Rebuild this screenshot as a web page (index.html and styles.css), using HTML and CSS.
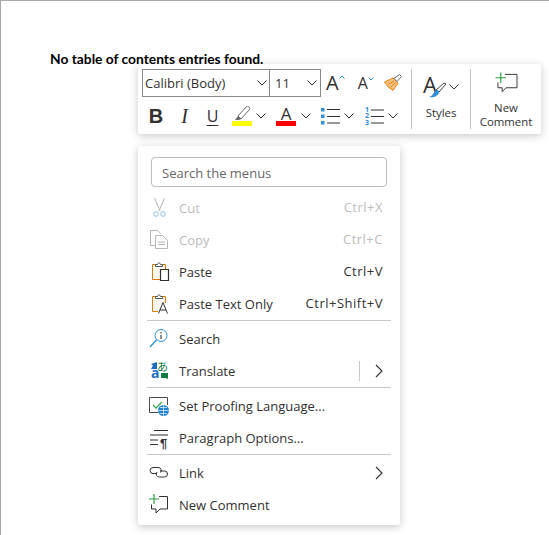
FILE: index.html
```html
<!DOCTYPE html>
<html lang="en">
<head>
    <meta charset="UTF-8">
    <title>Document context menu</title>
    <link rel="stylesheet" href="styles.css">
</head>
<body>
    <svg class="defs" aria-hidden="true">
        <symbol id="chev" viewBox="0 0 10 6"><path d="M.5.5 5 5 9.500.5" fill="none" stroke="#323130"/></symbol>
    </svg>

    <div class="page">
        <p class="toc-note">No table of contents entries found.</p>
    </div>

    <!-- Mini toolbar -->
    <div class="toolbar">
        <div class="tb-rows">
            <div class="tb-row">
                <div class="font-picker">
                    <div class="font-name"><span>Calibri (Body)</span><svg class="chev"><use href="#chev"/></svg></div>
                    <div class="font-size"><span>11</span><svg class="chev"><use href="#chev"/></svg></div>
                </div>
                <div class="grow-btn grow-big">
                    <span>A</span>
                    <svg class="caret" viewBox="0 0 6 4"><path d="M.5 3.500 3 1l2.500 2.500" fill="none" stroke="#2e8fd6"/></svg>
                </div>
                <div class="grow-btn grow-small">
                    <span>A</span>
                    <svg class="caret" viewBox="0 0 6 4"><path d="M.5.500 3 3 5.500.5" fill="none" stroke="#2e8fd6"/></svg>
                </div>
                <svg class="painter" viewBox="0 0 18 18">
                    <path d="M.5 8 9 4l5 5-5 7.500Q4 14 .5 8Z" fill="#f9c083" stroke="#e8830c"/>
                    <path d="M4 10.500 10 7M6.500 13.500l5-5" stroke="#e8830c" fill="none"/>
                    <path d="m10 4.500 3 3 4.500-5-2-2Z" fill="#fff" stroke="#6e6e6e"/>
                </svg>
            </div>
            <div class="tb-row">
                <div class="tb-btn btn-b">B</div>
                <div class="tb-btn btn-i">I</div>
                <div class="tb-btn btn-u">U</div>
                <div class="tb-btn btn-hi">
                    <div class="swatch-icon">
                        <svg class="pen" viewBox="0 0 20 15">
                            <path d="m6 10 8-9c1-1 2-1 3 0s1 2 0 3l-8 9Z" fill="#fff" stroke="#6a6a6a"/>
                            <path d="m6 10 3 3-2 1H3Z" fill="#6a6a6a"/>
                        </svg>
                        <i class="bar bar-yellow"></i>
                    </div>
                    <svg class="chev"><use href="#chev"/></svg>
                </div>
                <div class="tb-btn btn-color">
                    <div class="swatch-icon">
                        <span class="color-a">A</span>
                        <i class="bar bar-red"></i>
                    </div>
                    <svg class="chev"><use href="#chev"/></svg>
                </div>
                <div class="tb-btn btn-list btn-bullets">
                    <svg class="list-icon" viewBox="0 0 20 19">
                        <path d="M0 1h3.500v3.500H0ZM0 7.500h3.500V11H0ZM0 14h3.500v3.500H0Z" fill="#2e8fd6"/>
                        <path d="M6 2.500h13M6 9.500h13M6 16h13" stroke="#323130"/>
                    </svg>
                    <svg class="chev"><use href="#chev"/></svg>
                </div>
                <div class="tb-btn btn-list">
                    <div class="num-list">
                        <span class="nums">1<br>2<br>3</span>
                        <svg class="num-lines" viewBox="0 0 14 19"><path d="M0 3h13M0 9.500h13M0 16h13" stroke="#323130"/></svg>
                    </div>
                    <svg class="chev"><use href="#chev"/></svg>
                </div>
            </div>
        </div>

        <div class="tb-big tb-styles">
            <div class="styles-icon">
                <svg class="styles-svg" viewBox="0 0 24 24">
                    <text x="0" y="18" class="styles-a">A</text>
                    <path d="m13 15 8-7 2 1-7 8Z" fill="#fff" stroke="#444"/>
                    <path d="M6 22c4 1 10-1 10-5 0-2-3-3-4-1-2 2-2 5-6 6Z" fill="#2e8fd6"/>
                </svg>
                <svg class="chev"><use href="#chev"/></svg>
            </div>
            <span class="big-label">Styles</span>
        </div>
        <div class="tb-big tb-comment">
            <svg class="comment-svg" viewBox="0 0 23 22">
                <path d="M10 2.500h12.500v14H11l-4 4v-4H2.500V11" fill="#fff" stroke="#323130"/>
                <path d="M5.500.5v11M0 6h11" stroke="#2f9e44" stroke-width="1.200"/>
            </svg>
            <span class="big-label">New<br>Comment</span>
        </div>
    </div>

    <!-- Context menu -->
    <div class="menu">
        <div class="menu-search">Search the menus</div>

        <div class="item off">
            <svg class="ico" viewBox="0 0 20 20">
                <path d="M5.500 0 11 13M15.500 0 10 13" fill="none" stroke="#b5b5b5"/>
                <circle cx="7" cy="16" r="2.300" fill="none" stroke="#8cc0ea"/>
                <circle cx="14" cy="16" r="2.300" fill="none" stroke="#8cc0ea"/>
            </svg>
            <span class="label">Cut</span><span class="keys">Ctrl+X</span>
        </div>
        <div class="item off">
            <svg class="ico" viewBox="0 0 20 20">
                <path d="M7 15.500H1.500V.5h7l3 3" fill="none" stroke="#b5b5b5"/>
                <path d="M6.500 5.500h7l5 5v8h-12Z" fill="#fff" stroke="#b5b5b5"/>
                <path d="M9 12h7M9 14.500h7" stroke="#b5b5b5"/>
            </svg>
            <span class="label">Copy</span><span class="keys">Ctrl+C</span>
        </div>
        <div class="item">
            <svg class="ico" viewBox="0 0 20 20">
                <path d="M3.500 2.500h13v15h-13Z" fill="#fdf8f1" stroke="#e07a00"/>
                <path d="M6.500 4.500v-2h2c0-2 3-2 3 0h2v2Z" fill="#fff" stroke="#555"/>
                <path d="M11.500 7.500h8v11h-8Z" fill="#fff" stroke="#323130" stroke-width="1.200"/>
            </svg>
            <span class="label">Paste</span><span class="keys">Ctrl+V</span>
        </div>
        <div class="item">
            <svg class="ico" viewBox="0 0 20 20">
                <path d="M9 17.500H3.500v-15h13V9" fill="#fdf8f1" stroke="#e07a00"/>
                <path d="M6.500 4.500v-2h2c0-2 3-2 3 0h2v2Z" fill="#fff" stroke="#555"/>
                <path d="m9.500 19.500 4.500-11 4.500 11M11 16h6" fill="none" stroke="#323130"/>
            </svg>
            <span class="label">Paste Text Only</span><span class="keys">Ctrl+Shift+V</span>
        </div>

        <div class="sep"></div>

        <div class="item">
            <svg class="ico" viewBox="0 0 20 20">
                <circle cx="12" cy="6.500" r="6" fill="#fff" stroke="#2e8fd6"/>
                <path d="M7.500 11 1 18" stroke="#2e8fd6" stroke-width="1.300"/>
                <path d="M12 6v4M12 3v1.500" stroke="#323130" stroke-width="1.100"/>
            </svg>
            <span class="label">Search</span>
        </div>
        <div class="item">
            <svg class="ico" viewBox="0 0 20 20">
                <path d="M8 1v7H2l2-3.500L2 3Z" fill="#1b6ec2"/>
                <text x="2" y="17" class="tr-a">a</text>
                <text x="8" y="10" class="tr-j">あ</text>
                <path d="M12 17v-5h7v6l-2.500-1Z" fill="#107c41"/>
            </svg>
            <span class="label">Translate</span>
            <span class="split"></span>
            <svg class="more" viewBox="0 0 8 14"><path d="m1 1 6 6-6 6" fill="none" stroke="#323130" stroke-width="1.100"/></svg>
        </div>

        <div class="sep"></div>

        <div class="item">
            <svg class="ico" viewBox="0 0 20 20">
                <path d="M9 16.500H.5v-15h18V9" fill="none" stroke="#4a4a4a"/>
                <path d="m4 9 3 3 6-6" fill="none" stroke="#3aa655" stroke-width="1.300"/>
                <circle cx="14.500" cy="14.500" r="5.500" fill="#1f82d4"/>
                <path d="M9 14.500h11M14.500 9v11M11 11.500h7M11 17.500h7" stroke="#d5e9f9" stroke-width=".8"/>
            </svg>
            <span class="label">Set Proofing Language...</span>
        </div>
        <div class="item">
            <svg class="ico" viewBox="0 0 20 20">
                <path d="M5 2.500h14M1 7h18M1 12h8M1 16.500h8" stroke="#323130"/>
                <text x="11" y="20" class="pilcrow">¶</text>
            </svg>
            <span class="label">Paragraph Options...</span>
        </div>

        <div class="sep"></div>

        <div class="item">
            <svg class="ico" viewBox="0 0 20 20">
                <path d="M8 10.500H4a3 3 0 0 1 0-6h5a3 3 0 0 1 2.500 5" fill="none" stroke="#323130"/>
                <path d="M11 8h4.500a3 3 0 0 1 0 6h-5a3 3 0 0 1-2.500-5" fill="none" stroke="#323130"/>
            </svg>
            <span class="label">Link</span>
            <svg class="more" viewBox="0 0 8 14"><path d="m1 1 6 6-6 6" fill="none" stroke="#323130" stroke-width="1.100"/></svg>
        </div>
        <div class="item">
            <svg class="ico" viewBox="0 0 20 20">
                <path d="M10 1.500h8.500V14H11l-4 4v-4H2.500V9.500" fill="#fff" stroke="#323130"/>
                <path d="M5-1V9M0 4h10" stroke="#2f9e44" stroke-width="1.200"/>
            </svg>
            <span class="label">New Comment</span>
        </div>
    </div>
</body>
</html>
```

FILE: styles.css
```css
html, body {
    margin: 0;
    height: 100%;
    background-color: #fff;
    overflow: hidden;
}
body {
    font-family: "Open Sans", sans-serif;
    font-size: 13px;
    color: #323130;
}
.defs {
    display: none;
}
.page {
    height: 100%;
    box-sizing: border-box;
    border-top: 1px solid #a8a8a8;
    border-left: 1px solid #a8a8a8;
    padding: 50px 0 0 49px;
}
.toc-note {
    margin: 0;
    font-family: Lato, sans-serif;
    font-weight: bold;
    font-size: 13.8px;
    line-height: 16px;
    color: #000;
}

/* toolbar */
.toolbar {
    position: absolute;
    left: 138px;
    top: 64px;
    width: 403px;
    height: 70px;
    display: flex;
    background: #fff;
    border-radius: 2px;
    box-shadow: 0 2px 8px rgba(0, 0, 0, 0.22);
}
.tb-rows {
    width: 269px;
    padding: 5px 0 0 4px;
}
.tb-row {
    display: flex;
    align-items: center;
}
.tb-row + .tb-row {
    margin-top: 2px;
    height: 34px;
}
.chev {
    width: 10px;
    height: 6px;
    flex: none;
}
.font-picker {
    display: flex;
    flex: none;
    width: 179px;
    height: 28px;
    box-sizing: border-box;
    border: 1px solid #8a8a8a;
}
.font-name, .font-size {
    display: flex;
    align-items: center;
    justify-content: space-between;
    box-sizing: border-box;
}
.font-name {
    width: 127px;
    padding: 0 2px;
    border-right: 1px solid #8a8a8a;
}
.font-size {
    flex: 1;
    padding: 0 3px 0 5px;
}
.grow-btn {
    display: flex;
    align-items: flex-start;
    line-height: 1;
}
.grow-big {
    margin-left: 5px;
    font-size: 20px;
}
.grow-small {
    margin-left: 13px;
    font-size: 16px;
}
.caret {
    width: 6px;
    height: 4px;
    margin-top: 2px;
}
.painter {
    width: 18px;
    height: 18px;
    flex: none;
    margin-left: 10px;
}
.tb-btn {
    display: flex;
    align-items: center;
    justify-content: center;
    flex: none;
    height: 34px;
}
.btn-b {
    width: 28px;
    font-family: "Liberation Sans", sans-serif;
    font-weight: bold;
    font-size: 20px;
}
.btn-i {
    width: 29px;
    font-family: "Liberation Serif", serif;
    font-style: italic;
    font-size: 20px;
}
.btn-u {
    width: 27px;
    font-size: 16px;
    text-decoration: underline;
    text-underline-offset: 3px;
}
.btn-hi {
    width: 47px;
    justify-content: flex-start;
    padding-left: 6px;
    box-sizing: border-box;
    gap: 4px;
}
.btn-color {
    width: 45px;
    justify-content: flex-start;
    padding-left: 3px;
    box-sizing: border-box;
    gap: 5px;
}
.btn-list {
    width: 41px;
    justify-content: flex-start;
    padding-left: 6px;
    box-sizing: border-box;
    gap: 3px;
}
.btn-bullets {
    padding-left: 3px;
}
.swatch-icon {
    width: 20px;
    display: flex;
    flex-direction: column;
    align-items: center;
}
.pen {
    width: 20px;
    height: 15px;
}
.color-a {
    font-size: 17px;
    line-height: 15px;
}
.bar {
    display: block;
    width: 20px;
    height: 5px;
}
.bar-yellow {
    background-color: #ffff00;
}
.bar-red {
    background-color: #ff0000;
}
.list-icon {
    width: 20px;
    height: 19px;
}
.num-list {
    display: flex;
    width: 20px;
    height: 19px;
    gap: 2px;
}
.nums {
    width: 4px;
    font-size: 7px;
    line-height: 6.5px;
    font-weight: bold;
    color: #2e8fd6;
}
.num-lines {
    width: 14px;
    height: 19px;
}
.tb-big {
    display: flex;
    flex-direction: column;
    align-items: center;
    box-sizing: border-box;
    margin-top: 5px;
    height: 60px;
    border-left: 1px solid #c4c4c4;
}
.tb-styles {
    width: 59px;
}
.tb-comment {
    width: 71px;
}
.styles-icon {
    display: flex;
    align-items: center;
    gap: 2px;
    height: 30px;
    margin-top: 3px;
}
.styles-svg {
    width: 24px;
    height: 24px;
    overflow: visible;
}
.styles-a {
    font-family: "Open Sans", sans-serif;
    font-size: 22px;
    fill: #323130;
}
.comment-svg {
    width: 23px;
    height: 22px;
    margin-top: 3px;
}
.big-label {
    font-size: 11.4px;
    line-height: 14px;
    text-align: center;
    margin-top: 8px;
}
.tb-styles .big-label {
    margin-top: 4px;
}

/* context menu */
.menu {
    position: absolute;
    left: 138px;
    top: 146px;
    width: 262px;
    box-sizing: border-box;
    padding: 11px 0 4px;
    background: #fff;
    border-radius: 2px;
    box-shadow: 0 2px 8px rgba(0, 0, 0, 0.22);
}
.menu-search {
    display: flex;
    align-items: center;
    height: 30px;
    margin: 0 13px 5px;
    padding: 1px 0 0 10px;
    box-sizing: border-box;
    border: 1px solid #bdbdbd;
    border-radius: 4px;
    color: #666;
}
.item {
    display: flex;
    align-items: center;
    height: 32px;
    padding: 0 17px 0 11px;
}
.ico {
    width: 20px;
    height: 20px;
    flex: none;
    margin-right: 10px;
    overflow: visible;
}
.label {
    flex: 1;
}
.keys {
    letter-spacing: 0.5px;
    padding-bottom: 2px;
}
.off {
    color: #bdbcbb;
}
.sep {
    height: 1px;
    margin: 0 9px 2px;
    background-color: #c8c8c8;
}
.split {
    width: 1px;
    height: 20px;
    margin-right: 15px;
    background-color: #c8c8c8;
}
.more {
    width: 8px;
    height: 14px;
}
.tr-a {
    font-family: "Open Sans", sans-serif;
    font-size: 14px;
    font-weight: bold;
    fill: #1b6ec2;
}
.tr-j {
    font-family: "Noto Sans CJK JP", sans-serif;
    font-size: 11px;
    fill: #107c41;
}
.pilcrow {
    font-family: "Liberation Sans", sans-serif;
    font-size: 13px;
    font-weight: bold;
    fill: #323130;
}
```
